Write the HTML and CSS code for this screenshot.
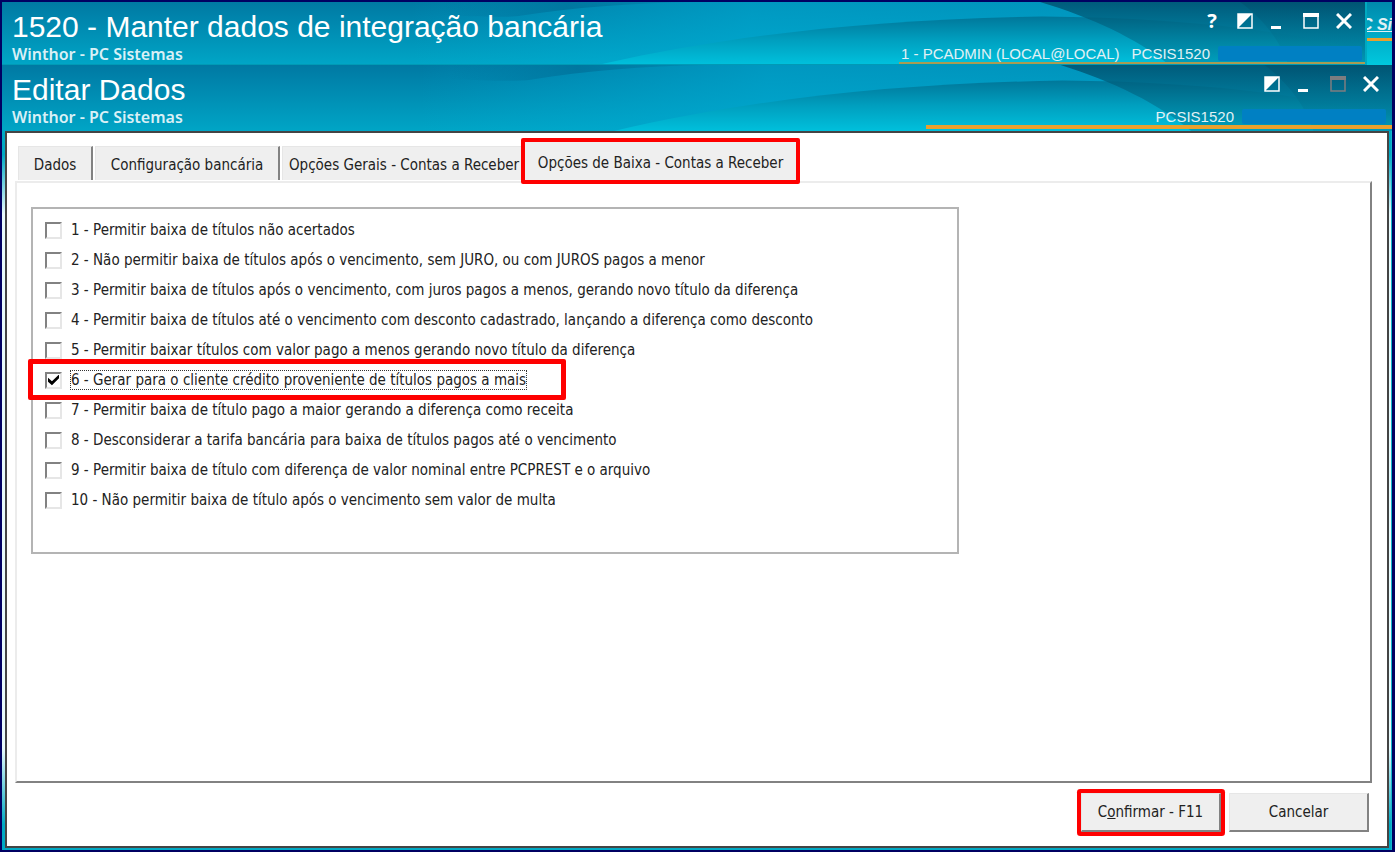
FILE: index.html
```html
<!DOCTYPE html>
<html lang="pt-BR">
<head>
    <meta charset="UTF-8">
    <meta name="viewport" content="width=device-width, initial-scale=1.0">
    <title>1520 - Manter dados de integração bancária</title>
    <link rel="stylesheet" href="styles.css">
</head>
<body>
    <!-- shared swoosh artwork for the title bars -->
    <svg class="defs" aria-hidden="true">
        <defs>
            <linearGradient id="gBase" x1="0" y1="0" x2="0" y2="1">
                <stop offset="0" stop-color="#0079a3"/>
                <stop offset="1" stop-color="#00a5c6"/>
            </linearGradient>
            <linearGradient id="gBright" x1="0" y1="0" x2="1" y2="0">
                <stop offset="0.3" stop-color="#00b0d8" stop-opacity="0"/>
                <stop offset="0.55" stop-color="#00acd4" stop-opacity="0.6"/>
                <stop offset="1" stop-color="#00a8d0" stop-opacity="0.5"/>
            </linearGradient>
            <linearGradient id="gTop" x1="0" y1="0" x2="1" y2="0">
                <stop offset="0" stop-color="#006f98" stop-opacity="0"/>
                <stop offset="0.5" stop-color="#006f98" stop-opacity="0.7"/>
                <stop offset="1" stop-color="#006f98" stop-opacity="0.2"/>
            </linearGradient>
            <linearGradient id="gWave" x1="0.3" y1="0" x2="0.34" y2="1">
                <stop offset="0" stop-color="#007699"/>
                <stop offset="0.5" stop-color="#009fbf"/>
                <stop offset="1" stop-color="#00c0dc"/>
            </linearGradient>
            <linearGradient id="gArc" x1="0" y1="0" x2="0" y2="1">
                <stop offset="0" stop-color="#004d6b" stop-opacity="0.8"/>
                <stop offset="1" stop-color="#0092b0" stop-opacity="0.7"/>
            </linearGradient>
            <linearGradient id="gEdge" x1="0" y1="0" x2="0" y2="1">
                <stop offset="0" stop-color="#004d6b" stop-opacity="0.5"/>
                <stop offset="1" stop-color="#0090b0" stop-opacity="0.5"/>
            </linearGradient>
        </defs>
        <symbol id="swoosh" viewBox="0 0 1363 64" preserveAspectRatio="none">
            <rect width="1363" height="64" fill="url(#gBase)"/>
            <rect width="1363" height="64" fill="url(#gBright)"/>
            <path d="M440 0H690C630 1 570 6 520 14C500 17 470 14 440 14Z" fill="url(#gTop)"/>
            <path d="M600 64C730 34 870 18 1040 15C1160 16 1270 26 1363 50V64Z" fill="url(#gWave)"/>
            <path d="M1038 0C1090 16 1135 38 1166 64H1363V0Z" fill="url(#gArc)"/>
            <path d="M1238 0C1262 18 1278 40 1286 64H1363V0Z" fill="url(#gEdge)"/>
        </symbol>
    </svg>

    <div class="desktop">
        <div class="top-row">
            <header class="titlebar">
                <svg class="swoosh" aria-hidden="true"><use href="#swoosh"/></svg>
                <div class="titles">
                    <h1>1520 - Manter dados de integração bancária</h1>
                    <p>Winthor - PC Sistemas</p>
                </div>
                <div class="titlebar-side">
                    <div class="window-buttons">
                        <button class="help" aria-label="Ajuda">?</button>
                        <button aria-label="Alternar"><svg viewBox="0 0 16 16"><path d="M1 1H15V15H1Z" fill="none" stroke="#fff" stroke-width="1.5"/><path d="M1 1H15L1 15Z" fill="#fff"/></svg></button>
                        <button aria-label="Minimizar"><svg viewBox="0 0 16 16"><path d="M1 13H11V16H1Z" fill="#fff"/></svg></button>
                        <button aria-label="Maximizar"><svg viewBox="0 0 16 16"><path d="M1 1H15V15H1Z" fill="none" stroke="#fff" stroke-width="1.5"/><path d="M0 0H16V4H0Z" fill="#fff"/></svg></button>
                        <button aria-label="Fechar"><svg viewBox="0 0 16 16"><path d="M1 1L15 15M15 1L1 15" stroke="#fff" stroke-width="3"/></svg></button>
                    </div>
                    <div class="session">
                        <span class="user">1 - PCADMIN (LOCAL@LOCAL)</span>
                        <span>PCSIS1520</span>
                        <span class="masked"></span>
                    </div>
                </div>
            </header>
            <div class="behind"><a href="#">C Si</a></div>
        </div>

        <header class="titlebar child">
            <svg class="swoosh" aria-hidden="true"><use href="#swoosh"/></svg>
            <div class="titles">
                <h2>Editar Dados</h2>
                <p>Winthor - PC Sistemas</p>
            </div>
            <div class="titlebar-side">
                <div class="window-buttons">
                    <button aria-label="Alternar"><svg viewBox="0 0 16 16"><path d="M1 1H15V15H1Z" fill="none" stroke="#fff" stroke-width="1.5"/><path d="M1 1H15L1 15Z" fill="#fff"/></svg></button>
                    <button aria-label="Minimizar"><svg viewBox="0 0 16 16"><path d="M1 13H11V16H1Z" fill="#fff"/></svg></button>
                    <button aria-label="Maximizar" disabled><svg viewBox="0 0 16 16"><path d="M1 1H15V15H1Z" fill="none" stroke="#7d7d80" stroke-width="1.5"/><path d="M0 0H16V4H0Z" fill="#7d7d80"/></svg></button>
                    <button aria-label="Fechar"><svg viewBox="0 0 16 16"><path d="M1 1L15 15M15 1L1 15" stroke="#fff" stroke-width="3"/></svg></button>
                </div>
                <div class="session">
                    <span>PCSIS1520</span>
                    <span class="masked"></span>
                </div>
            </div>
        </header>

        <main class="window">
            <div class="tabs" role="tablist">
                <button class="tab tab-dados" role="tab">Dados</button>
                <button class="tab tab-config" role="tab">Configuração bancária</button>
                <button class="tab tab-gerais" role="tab">Opções Gerais - Contas a Receber</button>
                <button class="tab active" role="tab" aria-selected="true">Opções de Baixa - Contas a Receber</button>
            </div>

            <section class="page" role="tabpanel">
                <div class="options">
                    <label class="option"><input type="checkbox"><span>1 - Permitir baixa de títulos não acertados</span></label>
                    <label class="option"><input type="checkbox"><span>2 - Não permitir baixa de títulos após o vencimento, sem JURO, ou com JUROS pagos a menor</span></label>
                    <label class="option"><input type="checkbox"><span>3 - Permitir baixa de títulos após o vencimento, com juros pagos a menos, gerando novo título da diferença</span></label>
                    <label class="option"><input type="checkbox"><span>4 - Permitir baixa de títulos até o vencimento com desconto cadastrado, lançando a diferença como desconto</span></label>
                    <label class="option"><input type="checkbox"><span>5 - Permitir baixar títulos com valor pago a menos gerando novo título da diferença</span></label>
                    <label class="option marked"><input type="checkbox" checked><span>6 - Gerar para o cliente crédito proveniente de títulos pagos a mais</span></label>
                    <label class="option"><input type="checkbox"><span>7 - Permitir baixa de título pago a maior gerando a diferença como receita</span></label>
                    <label class="option"><input type="checkbox"><span>8 - Desconsiderar a tarifa bancária para baixa de títulos pagos até o vencimento</span></label>
                    <label class="option"><input type="checkbox"><span>9 - Permitir baixa de título com diferença de valor nominal entre PCPREST e o arquivo</span></label>
                    <label class="option"><input type="checkbox"><span>10 - Não permitir baixa de título após o vencimento sem valor de multa</span></label>
                </div>
            </section>

            <footer class="actions">
                <button class="button confirm">C<u>o</u>nfirmar - F11</button>
                <button class="button">Cancelar</button>
            </footer>
        </main>
    </div>
</body>
</html>
```
FILE: styles.css
```css
:root {
    --navy: #000062;
    --orange: #e9a02e;
    --red: #fe0000;
    --face: #efefef;
    --shadow: #828282;
    --ui-font: "DejaVu Sans Condensed", "DejaVu Sans", sans-serif;
}

* {
    box-sizing: border-box;
}

body {
    margin: 0;
    font-family: var(--ui-font);
    font-size: 15px;
    color: #222;
    background-color: var(--navy);
}

h1, h2, p {
    margin: 0;
}

button {
    font: inherit;
    color: inherit;
    cursor: pointer;
}

.defs {
    position: absolute;
    width: 0;
    height: 0;
}

.desktop {
    display: flex;
    flex-direction: column;
    min-height: 100vh;
    border: 2px solid var(--navy);
    border-right-width: 3px;
    background: linear-gradient(#00a9c4 18%, #e8fafc 25%, #e8fafc 88%, #00a9c4 97%);
    box-shadow: inset -1px 0 #14b4cc;
}

/* title bars */
.top-row {
    display: flex;
    height: 63px;
}

.titlebar {
    position: relative;
    flex: 1;
    display: flex;
    justify-content: space-between;
    border-bottom: 1px solid #009ab5;
    color: #fff;
    overflow: hidden;
}

.titlebar.child {
    flex: none;
    height: 66px;
    border-bottom: none;
}

.swoosh {
    position: absolute;
    inset: 0;
    width: 100%;
    height: 100%;
}

.titles {
    position: relative;
    padding: 8px 10px;
    font-family: "Liberation Sans", Arial, sans-serif;
}

.titles h1,
.titles h2 {
    font-size: 30px;
    line-height: 34px;
    font-weight: normal;
}

.titles p {
    font-family: "Noto Sans", sans-serif;
    font-size: 16px;
    line-height: 20px;
    font-weight: 600;
    color: #d9f0f6;
}

.titlebar-side {
    position: relative;
    display: flex;
    flex-direction: column;
    justify-content: space-between;
    align-items: flex-end;
}

.window-buttons {
    display: flex;
    gap: 17px;
    padding: 11px 13px 0 0;
}

.window-buttons button {
    width: 16px;
    height: 16px;
    padding: 0;
    border: none;
    background: none;
}

.window-buttons svg {
    display: block;
    width: 16px;
    height: 16px;
}

.window-buttons .help {
    font-family: "Noto Sans", sans-serif;
    font-size: 20px;
    line-height: 16px;
    font-weight: bold;
}

.session {
    display: flex;
    gap: 8px;
    padding: 0 3px 0 2px;
    border-bottom: 2px solid #a99b54;
    font-family: "Liberation Sans", Arial, sans-serif;
    font-size: 15px;
    line-height: 16px;
    color: #e2f1f5;
}

.user {
    margin-right: 4px;
}

.child .session {
    padding: 0 6px 0 230px;
    border-bottom: 4px solid var(--orange);
    margin-bottom: 2px;
}

.masked {
    width: 144px;
    height: 15px;
    border-radius: 2px;
    background-color: #0080c3;
}

.behind {
    width: 27px;
    overflow: hidden;
    border-left: 2px solid #00a9c0;
    background: linear-gradient(#0089ac, #00c8de);
}

.behind a {
    display: flex;
    justify-content: flex-end;
    margin-top: 14px;
    padding-bottom: 4px;
    border-bottom: 3px solid var(--orange);
    font: italic bold 16px/18px "Liberation Sans", Arial, sans-serif;
    color: #e2f1f5;
    white-space: nowrap;
}

/* child window */
.window {
    flex: 1;
    display: flex;
    flex-direction: column;
    margin: 0 3px 2px;
    padding: 5px 15px 14px 8px;
    border: 2px solid #444;
    background-color: #fff;
}

.tabs {
    position: relative;
    z-index: 1;
    display: flex;
    align-items: flex-end;
    margin-bottom: -3px;
    padding-left: 3px;
}

.tab {
    height: 34px;
    margin-bottom: 4px;
    padding: 3px 6px 0;
    border: 0 solid #e6e6e6;
    border-width: 1px 0 0 1px;
    background-color: var(--face);
    white-space: nowrap;
}

.tab-dados,
.tab-config {
    margin-right: 2px;
    border-right: 2px solid var(--shadow);
}

.tab-dados {
    width: 75px;
}

.tab-config {
    width: 185px;
}

.tab-gerais {
    width: 239px;
    text-align: left;
}

.tab.active {
    width: 279px;
    height: 46px;
    margin: 0;
    border: 4px solid var(--red);
    border-radius: 2px;
}

.page {
    flex: 1;
    margin-bottom: 10px;
    padding: 24px 14px;
    border: 2px solid var(--shadow);
    border-top: 2px solid #ececec;
    border-left: 2px solid #ececec;
}

.options {
    display: flex;
    flex-direction: column;
    align-items: flex-start;
    width: 70%;
    height: 347px;
    padding: 6px 12px;
    border: 2px solid #b4b4b4;
}

.option {
    position: relative;
    display: flex;
    align-items: center;
    gap: 9px;
    height: 30px;
    white-space: nowrap;
}

.option input {
    appearance: none;
    width: 17px;
    height: 17px;
    margin: 0;
    border: 2px solid;
    border-color: var(--shadow) #e6e6e6 #e6e6e6 var(--shadow);
    background-color: #fff;
}

.option input:checked::after {
    content: "";
    display: block;
    width: 11px;
    height: 11px;
    margin: 1px;
    background-color: #000;
    clip-path: polygon(0 30%, 36% 62%, 100% 0, 100% 34%, 36% 98%, 0 66%);
}

.option input:checked + span {
    outline: 1px dotted #333;
}

/* red callout around the highlighted option */
.marked::before {
    content: "";
    position: absolute;
    inset: -6px -40px -5px -17px;
    border: 5px solid var(--red);
    border-radius: 2px;
}

.actions {
    display: flex;
    justify-content: flex-end;
    gap: 8px;
    padding-right: 3px;
}

.button {
    width: 140px;
    height: 39px;
    border: 1px solid #e6e6e6;
    border-right: 2px solid var(--shadow);
    border-bottom: 2px solid var(--shadow);
    background-color: var(--face);
}

.confirm {
    border-radius: 1px;
    box-shadow: 0 0 0 4px var(--red);
}
```
